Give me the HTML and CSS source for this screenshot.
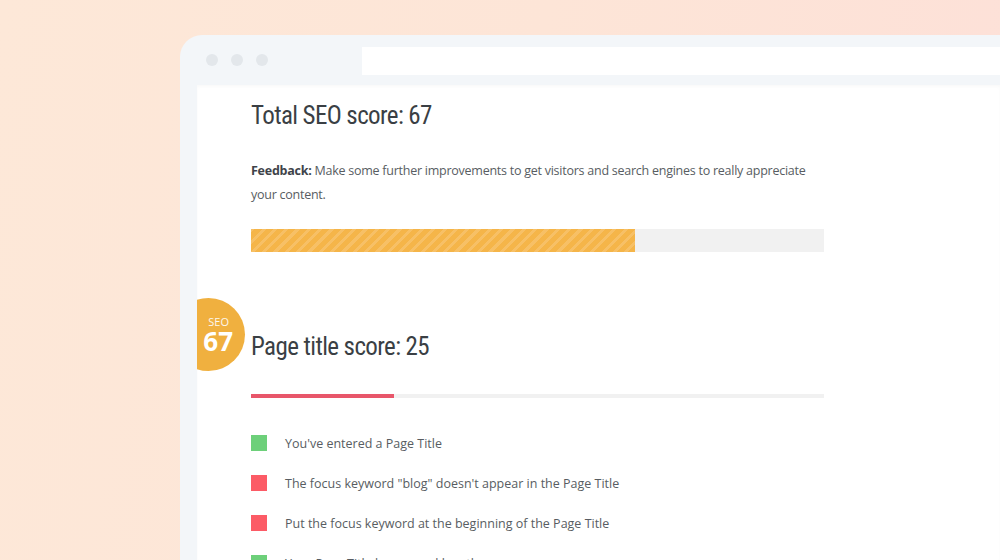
FILE: index.html
```html
<!DOCTYPE html>
<html>
<head>
<meta charset="utf-8">
<link rel="stylesheet" href="styles.css">
</head>
<body>
<div class="stage">
  <div class="browser">
    <div class="topbar">
      <div class="dots"><span class="dot"></span><span class="dot"></span><span class="dot"></span></div>
      <div class="address"></div>
    </div>
    <div class="content">
      <div class="badge"><span class="badge-label">SEO</span><span class="badge-num">67</span></div>
      <h1 class="heading">Total SEO score: 67</h1>
      <p class="feedback"><b>Feedback:</b> Make some further improvements to get visitors and search engines to really appreciate your content.</p>
      <div class="track track-thick"><div class="fill fill-orange" style="width:67%"></div></div>
      <h2 class="heading heading-2">Page title score: 25</h2>
      <div class="track track-thin"><div class="fill fill-red" style="width:25%"></div></div>
      <ul class="checks">
        <li class="check"><span class="sq sq-green"></span>You've entered a Page Title</li>
        <li class="check"><span class="sq sq-red"></span>The focus keyword "blog" doesn't appear in the Page Title</li>
        <li class="check"><span class="sq sq-red"></span>Put the focus keyword at the beginning of the Page Title</li>
        <li class="check"><span class="sq sq-green"></span>Your Page Title has a good length</li>
      </ul>
    </div>
  </div>
</div>
</body>
</html>
```
FILE: styles.css
```css
html, body {
  margin: 0;
  padding: 0;
  height: 560px;
  overflow: hidden;
}
body {
  background: linear-gradient(100deg, #fde8d8 0%, #fde5d7 50%, #fde0d8 100%);
  font-family: "Open Sans", "Liberation Sans", sans-serif;
}
.stage {
  padding: 35px 0 0 180px;
  height: 525px;
}
.browser {
  height: 100%;
  background: #f3f6f9;
  border-radius: 22px 0 0 0;
  padding-left: 17px;
  display: flex;
  flex-direction: column;
}
.topbar {
  height: 50px;
  display: flex;
  align-items: center;
  flex-shrink: 0;
}
.dots {
  display: flex;
  gap: 13px;
  padding-left: 9px;
  width: 156px;
}
.dot {
  width: 12px;
  height: 12px;
  border-radius: 50%;
  background: #e3e7eb;
}
.address {
  flex: 1;
  height: 28px;
  margin-top: 2px;
  background: #ffffff;
}
.content {
  flex: 1;
  background: #ffffff;
  position: relative;
  overflow: hidden;
  padding: 0 0 0 54px;
  box-shadow: inset 0 2px 3px rgba(0,0,0,0.025);
}
.badge {
  position: absolute;
  left: -25px;
  top: 213px;
  width: 73px;
  height: 73px;
  border-radius: 50%;
  background: #f0b03f;
  color: #fff;
  display: flex;
  flex-direction: column;
  align-items: flex-end;
  justify-content: center;
  padding-right: 12px;
  box-sizing: border-box;
}
.badge-label {
  font-size: 11px;
  line-height: 13px;
  margin-right: 4px;
  opacity: 0.9;
}
.badge-num {
  font-size: 26px;
  font-weight: 700;
  line-height: 26px;
}
.heading {
  margin: 0;
  font-family: "Liberation Sans Narrow", "Roboto Condensed", Roboto, sans-serif;
  font-weight: 400;
  font-size: 25px;
  letter-spacing: -0.6px;
  line-height: 30px;
  color: #3a3f44;
  padding-top: 16px;
}
.heading-2 {
  padding-top: 80px;
}
.feedback {
  margin: 0;
  padding-top: 28px;
  width: 573px;
  font-size: 12.5px;
  letter-spacing: -0.25px;
  line-height: 24px;
  color: #585d62;
}
.feedback b {
  color: #3e4349;
  font-weight: 700;
}
.track {
  width: 573px;
  background: #f1f1f1;
}
.track-thick {
  height: 23px;
  margin-top: 22px;
}
.track-thin {
  height: 4px;
  margin-top: 32px;
}
.fill {
  height: 100%;
}
.fill-orange {
  background: repeating-linear-gradient(-45deg, #f5b549 0 5px, #f7c066 5px 8px);
}
.fill-red {
  background: #e8566a;
}
.checks {
  list-style: none;
  margin: 0;
  padding: 25px 0 0 0;
}
.check {
  display: flex;
  align-items: center;
  height: 40px;
  font-size: 12.5px;
  color: #585d62;
}
.sq {
  width: 16px;
  height: 16px;
  margin-right: 18px;
  flex-shrink: 0;
}
.sq-green { background: #6dd07a; }
.sq-red { background: #fc5b66; }
```
